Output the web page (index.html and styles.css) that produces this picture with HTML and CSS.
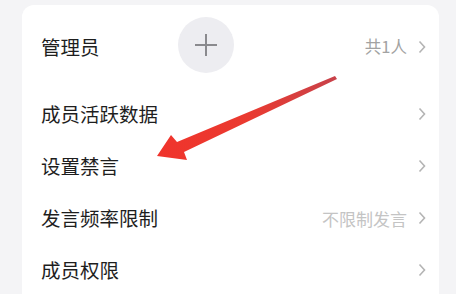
FILE: index.html
```html
<!DOCTYPE html>
<html lang="zh">
<head>
<meta charset="utf-8">
<link rel="stylesheet" href="styles.css">
</head>
<body>
<div class="page">
  <div class="card">
    <div class="row row-admin">
      <span class="label">管理员</span>
      <span class="add">
        <svg width="24" height="24" viewBox="0 0 24 24"><path d="M12 1V23M1 12H23" stroke="#8a8a8e" stroke-width="2" fill="none"/></svg>
      </span>
      <span class="value dark">共1人</span>
      <svg class="chev" width="8" height="14" viewBox="0 0 8 14"><path d="M1.5 1.5L6.5 7L1.5 12.5" stroke="#b4b4b4" stroke-width="1.6" fill="none"/></svg>
    </div>
    <div class="row">
      <span class="label">成员活跃数据</span>
      <svg class="chev" width="8" height="14" viewBox="0 0 8 14"><path d="M1.5 1.5L6.5 7L1.5 12.5" stroke="#b4b4b4" stroke-width="1.6" fill="none"/></svg>
    </div>
    <div class="row">
      <span class="label">设置禁言</span>
      <svg class="chev" width="8" height="14" viewBox="0 0 8 14"><path d="M1.5 1.5L6.5 7L1.5 12.5" stroke="#b4b4b4" stroke-width="1.6" fill="none"/></svg>
    </div>
    <div class="row">
      <span class="label">发言频率限制</span>
      <span class="value">不限制发言</span>
      <svg class="chev" width="8" height="14" viewBox="0 0 8 14"><path d="M1.5 1.5L6.5 7L1.5 12.5" stroke="#b4b4b4" stroke-width="1.6" fill="none"/></svg>
    </div>
    <div class="row">
      <span class="label">成员权限</span>
      <svg class="chev" width="8" height="14" viewBox="0 0 8 14"><path d="M1.5 1.5L6.5 7L1.5 12.5" stroke="#b4b4b4" stroke-width="1.6" fill="none"/></svg>
    </div>
  </div>
  <svg class="arrow" width="456" height="294" viewBox="0 0 456 294">
    <defs>
      <linearGradient id="ag" x1="336" y1="77" x2="158" y2="156" gradientUnits="userSpaceOnUse">
        <stop offset="0" stop-color="#c8424a"/>
        <stop offset="0.5" stop-color="#ea3a30"/>
        <stop offset="1" stop-color="#f0342c"/>
      </linearGradient>
    </defs>
    <polygon points="335,76 337,79 184,152 187,160 157,156 171,135 177,142" fill="url(#ag)"/>
  </svg>
</div>
</body>
</html>
```
FILE: styles.css
```css
html, body {
  margin: 0;
  padding: 0;
}
body {
  background: #f4f4f6;
  font-family: "Noto Sans CJK SC", "Noto Sans", sans-serif;
  overflow: hidden;
}
.page {
  position: relative;
  width: 456px;
  height: 294px;
  padding-top: 5px;
  box-sizing: border-box;
}
.card {
  margin-left: 22px;
  width: 417px;
  background: #ffffff;
  border-radius: 12px 12px 0 0;
  padding: 0 13px 0 19px;
  box-sizing: border-box;
}
.row {
  display: flex;
  align-items: center;
  height: 52px;
}
.row-admin {
  height: 83px;
}
.label {
  font-size: 19.5px;
  color: #1e1e1e;
  line-height: 1;
}
.add {
  width: 56px;
  height: 56px;
  border-radius: 50%;
  background: #ededf1;
  display: flex;
  align-items: center;
  justify-content: center;
  margin-left: 78px;
  margin-top: -4px;
}
.value {
  margin-left: auto;
  font-size: 17px;
  color: #c4c4c4;
  margin-right: 11px;
  line-height: 1;
}
.value.dark {
  font-size: 16.5px;
  color: #a2a2a2;
}
.chev {
  margin-left: auto;
  flex: none;
}
.value + .chev {
  margin-left: 0;
}
.arrow {
  position: absolute;
  left: 0;
  top: 0;
  pointer-events: none;
}
```
